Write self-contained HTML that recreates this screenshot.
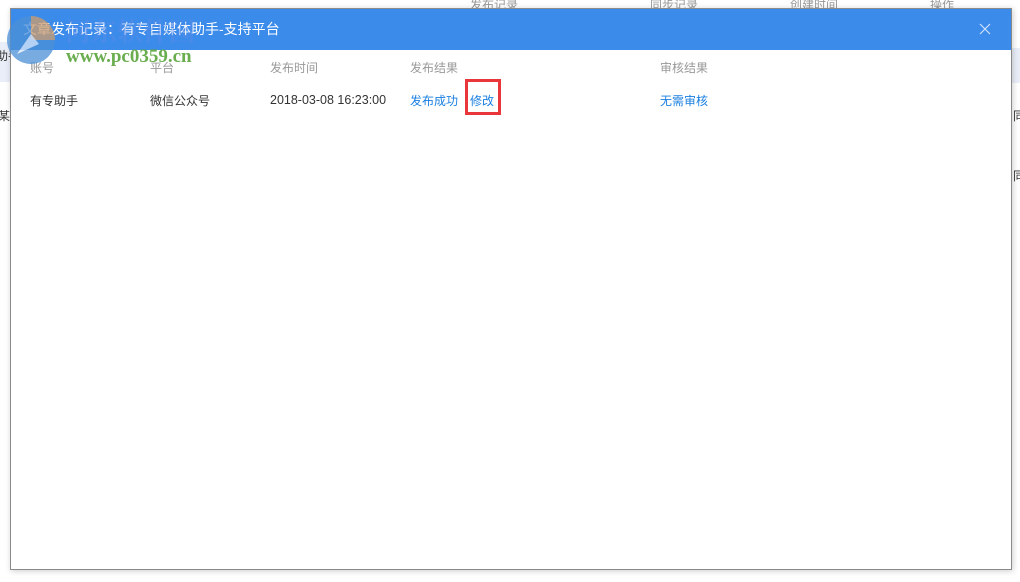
<!DOCTYPE html>
<html><head><meta charset="utf-8"><style>
*{margin:0;padding:0;box-sizing:border-box}
body{width:1020px;height:582px;background:#fff;position:relative;overflow:hidden;font-family:"Liberation Sans","Noto Sans CJK SC",sans-serif;font-size:12px;color:#333}
.bg{position:absolute;font-size:12px;color:#999}
#dlg{position:absolute;left:10px;top:8px;width:1002px;height:562px;background:#fff;border:1px solid #8a8a8a;box-shadow:1px 1px 6px rgba(0,0,0,.2)}
#hd{position:absolute;left:0;top:0;right:0;height:41px;background:#3b8beb;color:#fff;font-size:14px;line-height:41px;padding-left:12px}
.t{position:absolute;white-space:nowrap}
.h{color:#999;top:50px}
.r{top:83px;color:#333}
.b{color:#1a7fe0}
</style></head><body>
<div class="bg" style="left:470px;top:-4px">发布记录</div>
<div class="bg" style="left:650px;top:-4px">同步记录</div>
<div class="bg" style="left:790px;top:-4px">创建时间</div>
<div class="bg" style="left:930px;top:-4px">操作</div>
<div style="position:absolute;left:0;top:42px;width:10px;height:40px;background:#e9eef8"></div>
<div class="bg" style="left:-4px;top:47px;color:#333">助手</div>
<div class="bg" style="left:-2px;top:107px;color:#333">某</div>
<div style="position:absolute;left:1012px;top:48px;width:8px;height:35px;background:#e9eef8"></div>
<div class="bg" style="left:1013px;top:107px;color:#333">同</div>
<div class="bg" style="left:1013px;top:167px;color:#333">同</div>
<div id="dlg">
<div id="hd">文章发布记录：有专自媒体助手-支持平台
<svg style="position:absolute;right:20px;top:14px" width="12" height="12" viewBox="0 0 12 12"><path d="M1 1L11 11M11 1L1 11" stroke="#cfe2fb" stroke-width="1.2"/></svg></div>
<div class="t h" style="left:19px">账号</div>
<div class="t h" style="left:139px">平台</div>
<div class="t h" style="left:259px">发布时间</div>
<div class="t h" style="left:399px">发布结果</div>
<div class="t h" style="left:649px">审核结果</div>
<div class="t r" style="left:19px">有专助手</div>
<div class="t r" style="left:139px">微信公众号</div>
<div class="t r" style="left:259px;top:84px;font-size:12.5px">2018-03-08 16:23:00</div>
<div class="t r b" style="left:399px">发布成功</div>
<div class="t r b" style="left:459px">修改</div>
<div style="position:absolute;left:454px;top:70px;width:36px;height:36px;border:3px solid #e8363a"></div>
<div class="t r b" style="left:649px">无需审核</div>
</div>
<svg style="position:absolute;left:5px;top:12px;opacity:.75" width="56" height="56" viewBox="0 0 56 56"><circle cx="26" cy="28" r="24" fill="#4b8fd6"/><path d="M26 4A24 24 0 0 1 50 28L26 28Z" fill="#f0a050" opacity=".8"/><path d="M12 42L26 22L34 32Z" fill="#fff" opacity=".8"/></svg>
<div style="position:absolute;left:65px;top:12px;font-family:'Noto Serif CJK SC',serif;font-size:26px;font-weight:bold;color:rgba(90,140,230,.45)">河东软件园</div>
<div style="position:absolute;left:66px;top:46px;font-family:'Liberation Serif',serif;font-size:19px;font-weight:bold;color:#5aa53c;opacity:.9">www.pc0359.cn</div>
</body></html>
